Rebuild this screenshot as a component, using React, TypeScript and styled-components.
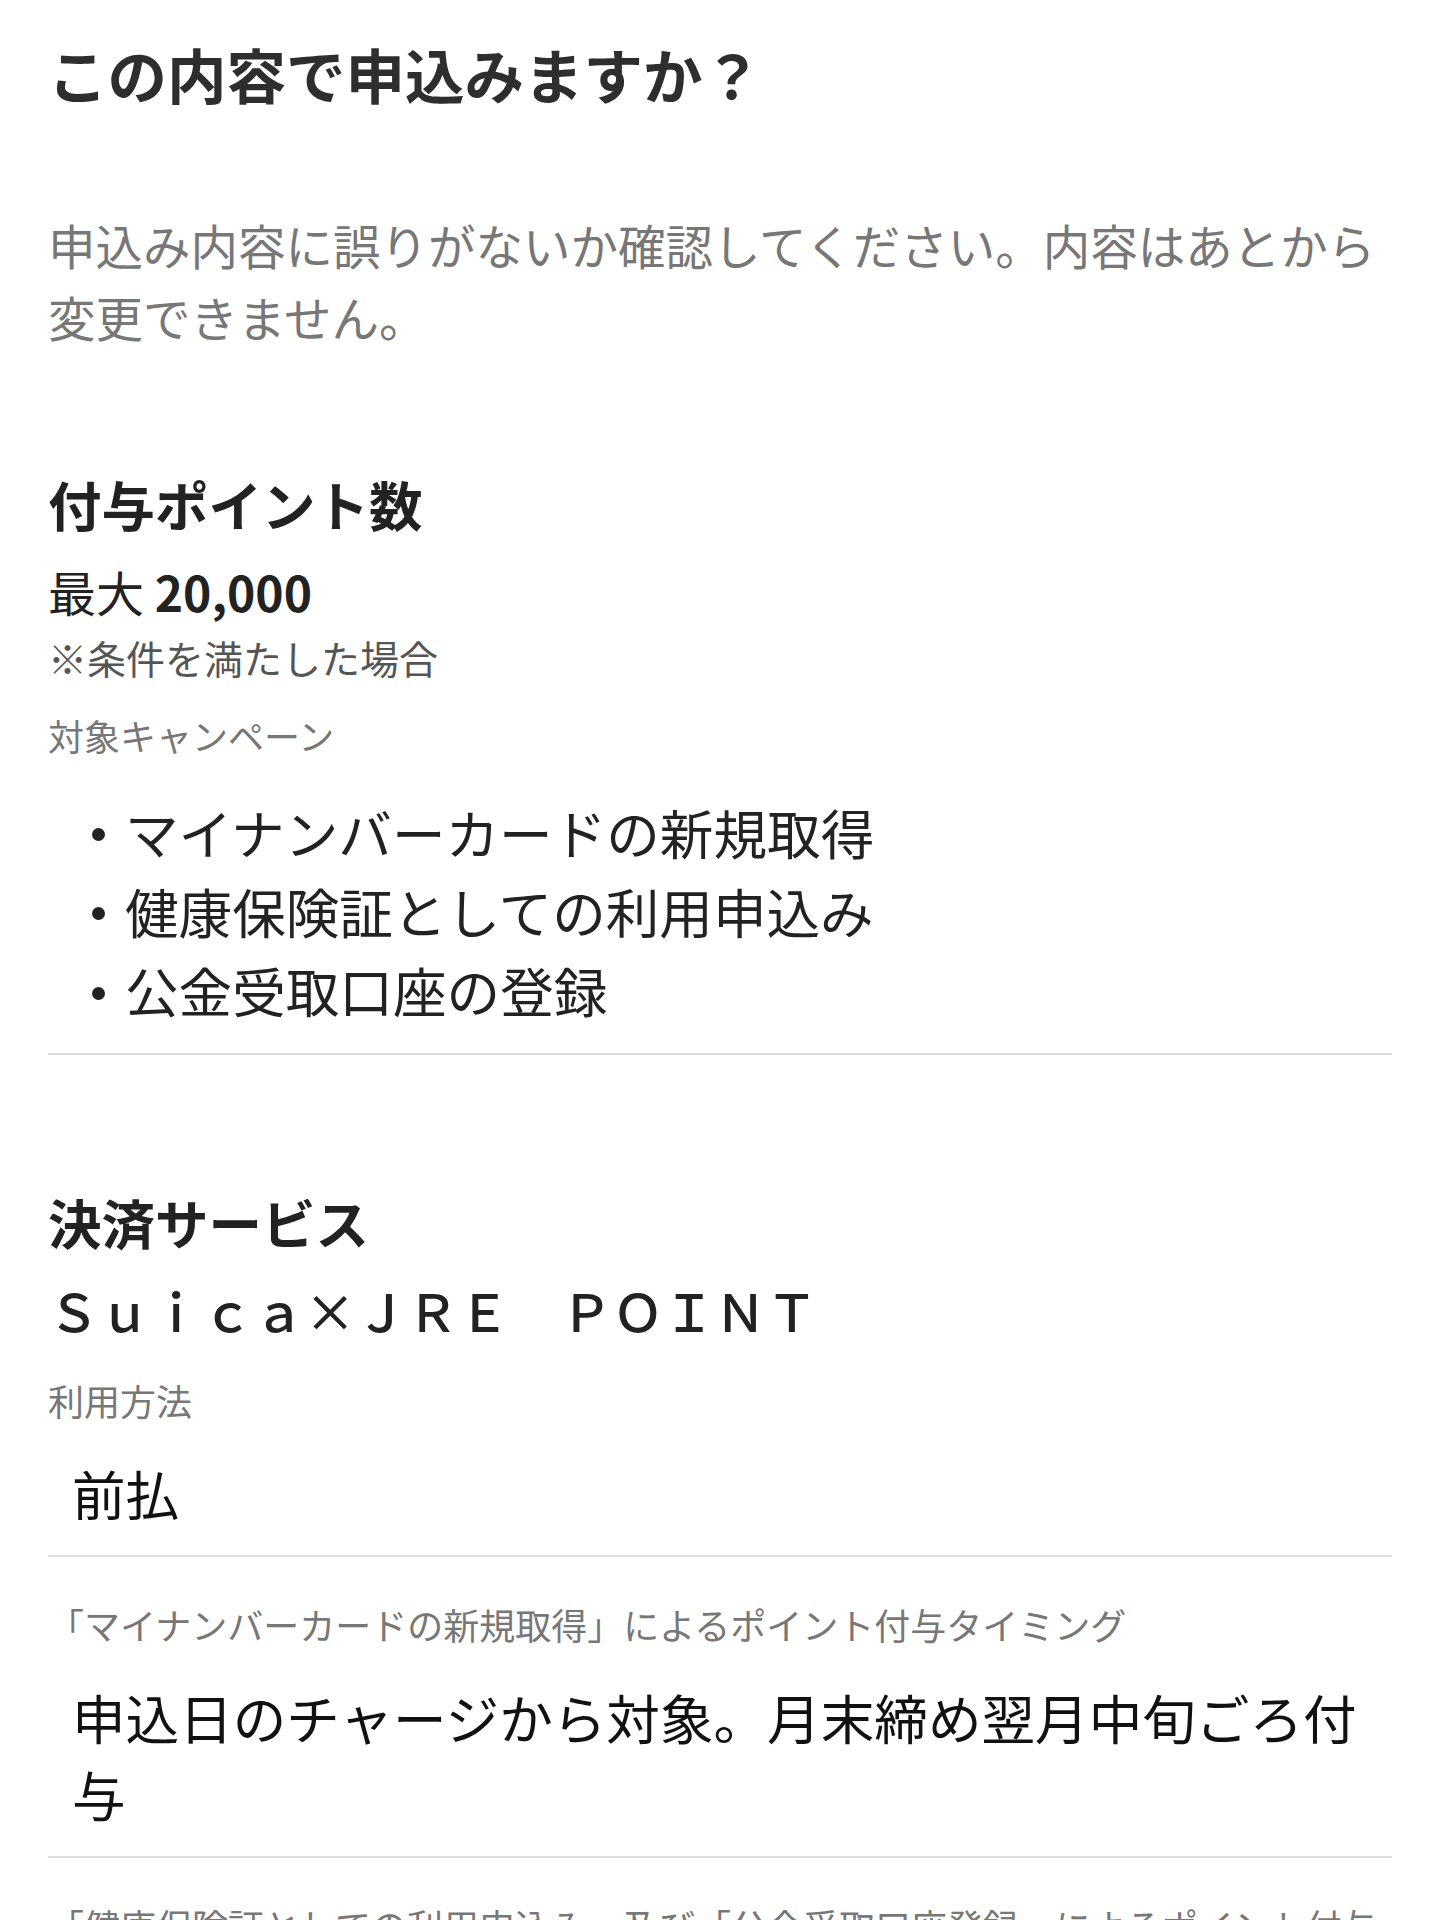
import styled, { createGlobalStyle } from 'styled-components';

const GlobalStyle = createGlobalStyle`
  html, body {
    margin: 0;
    padding: 0;
    background: #ffffff;
  }
  body {
    font-family: 'Noto Sans CJK JP', 'Noto Sans', sans-serif;
    color: #222222;
    -webkit-font-smoothing: antialiased;
  }
`;

const Page = styled.main`
  padding: 30px 48px 0;
`;

const Title = styled.h1`
  margin: 0;
  font-size: 59.5px;
  font-weight: 700;
  line-height: 86px;
  color: #2e2e2e;
`;

const Lead = styled.p`
  margin: 93px 0 0;
  font-size: 47.5px;
  line-height: 72px;
  color: #777777;
`;

const Section = styled.section<{ $gap: number }>`
  margin-top: ${(p) => p.$gap}px;
`;

const SectionTitle = styled.h2`
  margin: 0;
  font-size: 53.5px;
  font-weight: 700;
  line-height: 79px;
  color: #222222;
`;

const Points = styled.p`
  margin: 12px 0 0;
  font-size: 48px;
  line-height: 72px;
  color: #222222;
`;

const PointsNumber = styled.strong`
  font-size: 48px;
  font-weight: 700;
  line-height: 72px;
`;

const Note = styled.p`
  margin: 0;
  font-size: 39px;
  line-height: 60px;
  color: #555555;
`;

const ServiceName = styled.p`
  margin: 9px 0 0;
  font-size: 51.3px;
  font-weight: 500;
  line-height: 79px;
  color: #222222;
`;

const Field = styled.div<{ $top: number }>`
  margin-top: ${(p) => p.$top}px;
  padding-bottom: 24px;
  border-bottom: 2px solid #dddddd;
`;

const FieldLabel = styled.div`
  font-size: 36px;
  line-height: 54px;
  color: #777777;
`;

const FieldValue = styled.div`
  margin-top: 27px;
  padding: 0 24px;
  font-size: 53.6px;
  line-height: 77px;
  color: #111111;
`;

const CampaignList = styled.ul`
  list-style: none;
  margin: 30px 0 -1px;
  padding: 0 24px;
`;

const CampaignItem = styled.li`
  display: flex;
  align-items: center;
  font-size: 53.6px;
  line-height: 79.2px;
  color: #222222;

  &::before {
    content: '';
    flex: 0 0 auto;
    width: 13px;
    height: 13px;
    margin: 6px 20px 0 20px;
    border-radius: 50%;
    background: #222222;
  }
`;

const campaigns = [
  'マイナンバーカードの新規取得',
  '健康保険証としての利用申込み',
  '公金受取口座の登録',
];

const timings = [
  {
    label: '「マイナンバーカードの新規取得」によるポイント付与タイミング',
    value: '申込日のチャージから対象。月末締め翌月中旬ごろ付与',
  },
  {
    label: '「健康保険証としての利用申込み」及び「公金受取口座登録」によるポイント付与タイミング',
    value: '申込日の翌月末ごろ付与',
  },
];

function App() {
  return (
    <>
      <GlobalStyle />
      <Page>
        <Title>この内容で申込みますか？</Title>
        <Lead>申込み内容に誤りがないか確認してください。内容はあとから変更できません。</Lead>

        <Section $gap={111}>
          <SectionTitle>付与ポイント数</SectionTitle>
          <Points>
            最大 <PointsNumber>20,000</PointsNumber>
          </Points>
          <Note>※条件を満たした場合</Note>
          <Field $top={21}>
            <FieldLabel>対象キャンペーン</FieldLabel>
            <CampaignList>
              {campaigns.map((c) => (
                <CampaignItem key={c}>{c}</CampaignItem>
              ))}
            </CampaignList>
          </Field>
        </Section>

        <Section $gap={127}>
          <SectionTitle>決済サービス</SectionTitle>
          <ServiceName>Ｓｕｉｃａ×ＪＲＥ　ＰＯＩＮＴ</ServiceName>
          <Field $top={24}>
            <FieldLabel>利用方法</FieldLabel>
            <FieldValue>前払</FieldValue>
          </Field>
          {timings.map((t) => (
            <Field key={t.label} $top={40}>
              <FieldLabel>{t.label}</FieldLabel>
              <FieldValue>{t.value}</FieldValue>
            </Field>
          ))}
        </Section>
      </Page>
    </>
  );
}

export default App;
